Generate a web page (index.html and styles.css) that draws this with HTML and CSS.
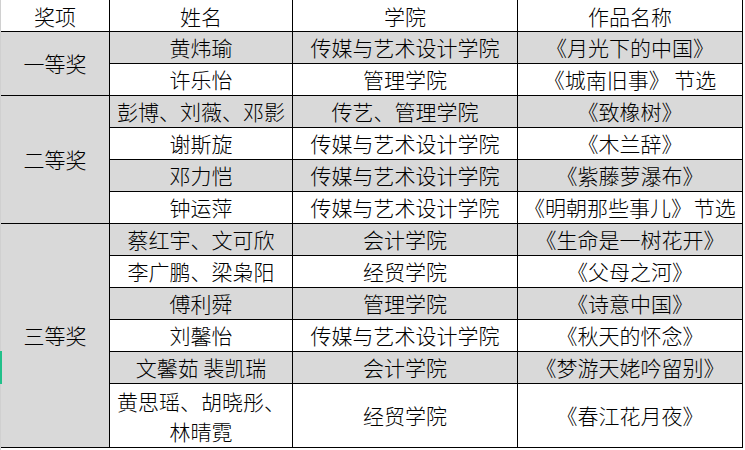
FILE: index.html
```html
<!DOCTYPE html>
<html lang="zh-CN">
<head>
<meta charset="utf-8">
<title>获奖名单</title>
<link rel="stylesheet" href="styles.css">
</head>
<body>
<div class="sheet">
  <div class="grid">
    <div class="cell head">奖项</div>
    <div class="cell head">姓名</div>
    <div class="cell head">学院</div>
    <div class="cell head">作品名称</div>

    <div class="cell award span2">一等奖</div>
    <div class="cell g">黄炜瑜</div>
    <div class="cell g">传媒与艺术设计学院</div>
    <div class="cell g">《月光下的中国》</div>
    <div class="cell">许乐怡</div>
    <div class="cell">管理学院</div>
    <div class="cell">《城南旧事》 节选</div>

    <div class="cell award span4">二等奖</div>
    <div class="cell g">彭博、刘薇、邓影</div>
    <div class="cell g">传艺、管理学院</div>
    <div class="cell g">《致橡树》</div>
    <div class="cell">谢斯旋</div>
    <div class="cell">传媒与艺术设计学院</div>
    <div class="cell">《木兰辞》</div>
    <div class="cell g">邓力恺</div>
    <div class="cell g">传媒与艺术设计学院</div>
    <div class="cell g">《紫藤萝瀑布》</div>
    <div class="cell">钟运萍</div>
    <div class="cell">传媒与艺术设计学院</div>
    <div class="cell wide">《明朝那些事儿》 节选</div>

    <div class="cell award span6">三等奖</div>
    <div class="cell g">蔡红宇、文可欣</div>
    <div class="cell g">会计学院</div>
    <div class="cell g">《生命是一树花开》</div>
    <div class="cell">李广鹏、梁枭阳</div>
    <div class="cell">经贸学院</div>
    <div class="cell">《父母之河》</div>
    <div class="cell g">傅利舜</div>
    <div class="cell g">管理学院</div>
    <div class="cell g">《诗意中国》</div>
    <div class="cell">刘馨怡</div>
    <div class="cell">传媒与艺术设计学院</div>
    <div class="cell">《秋天的怀念》</div>
    <div class="cell g">文馨茹 裴凯瑞</div>
    <div class="cell g">会计学院</div>
    <div class="cell g">《梦游天姥吟留别》</div>
    <div class="cell multi">黄思瑶、胡晓彤、<br>林晴霓</div>
    <div class="cell">经贸学院</div>
    <div class="cell">《春江花月夜》</div>
  </div>
  <div class="marker"></div>
</div>
</body>
</html>
```
FILE: styles.css
```css
html, body {
  margin: 0;
  padding: 0;
  background: #ffffff;
}

.sheet {
  position: relative;
  width: 745px;
  height: 450px;
  padding-left: 1px;
  box-sizing: border-box;
  overflow: hidden;
  background: linear-gradient(#d0d0d0, #d0d0d0) left top / 1px 100% no-repeat;
  font-family: "Noto Sans CJK SC", "Noto Sans", sans-serif;
  font-size: 21px;
  font-weight: 300;
  color: #000;
}

.grid {
  display: grid;
  grid-template-columns: 109px 183px 225px 225px;
  grid-template-rows: repeat(12, 32px) 64px;
  width: 742px;
}

.cell {
  display: flex;
  align-items: center;
  justify-content: center;
  border-right: 1px solid #000;
  border-bottom: 1px solid #000;
  white-space: nowrap;
  line-height: 1;
}

.cell.head {
  padding-top: 2px;
}

.cell.g,
.cell.award {
  background: #d9d9d9;
}

.span2 { grid-row: span 2; }
.span4 { grid-row: span 4; }
.span6 { grid-row: span 6; }

.cell.wide {
  justify-content: flex-start;
  padding-left: 6px;
  overflow: visible;
  word-spacing: -3px;
}

.cell.multi {
  text-align: center;
  line-height: 30px;
}

.marker {
  position: absolute;
  left: 0;
  top: 351px;
  width: 2px;
  height: 33px;
  background: #21c08a;
}
```
